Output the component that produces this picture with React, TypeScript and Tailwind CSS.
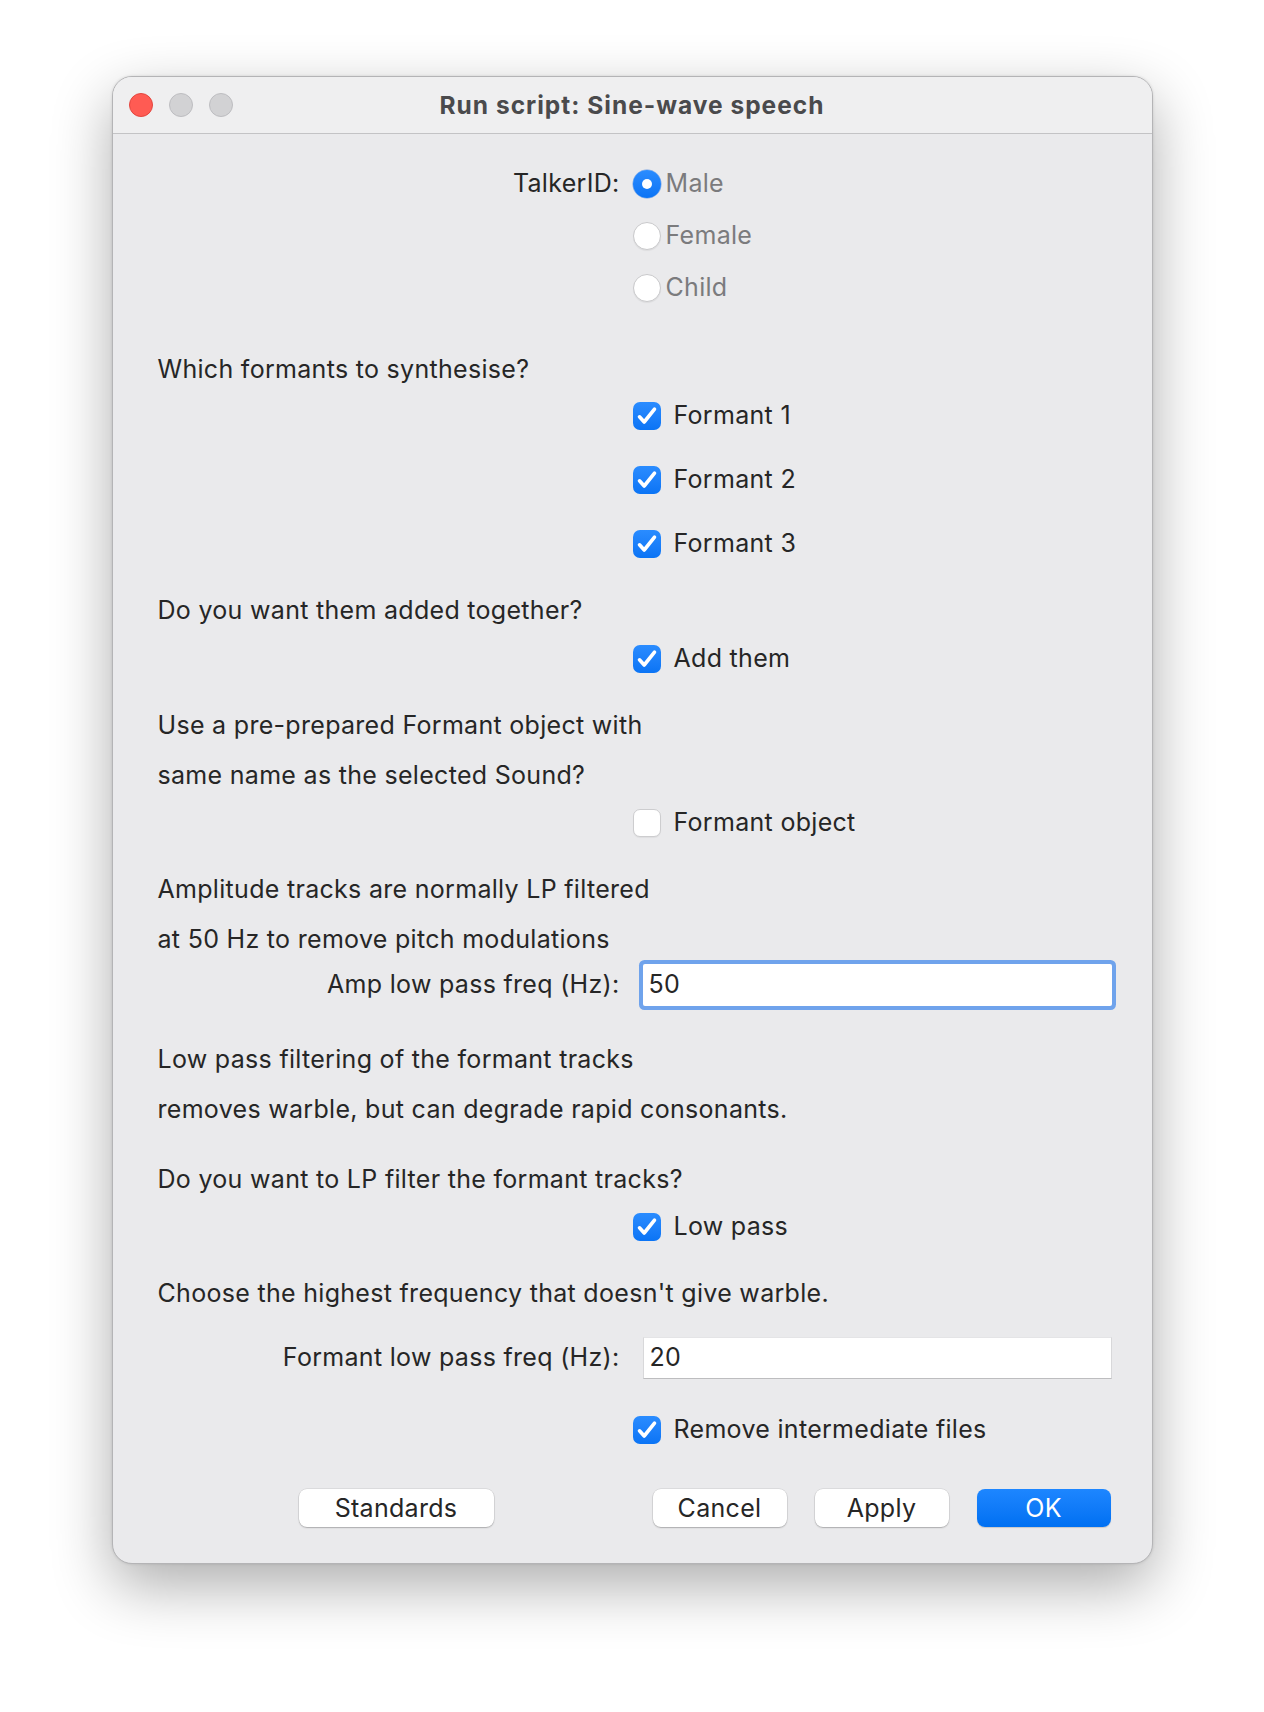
import React from "react";

const font = { fontFamily: "Inter, 'Noto Sans', sans-serif" };

function Radio({ checked, label }: { checked?: boolean; label: string }) {
  return (
    <div className="flex items-center">
      {checked ? (
        <span className="w-[28px] h-[28px] rounded-full bg-gradient-to-b from-[#2a8cff] to-[#0a74f5] flex items-center justify-center shadow-[0_0_0_0.5px_rgba(0,90,220,0.5)]">
          <span className="w-[10px] h-[10px] rounded-full bg-white" />
        </span>
      ) : (
        <span className="w-[28px] h-[28px] rounded-full bg-white border border-[#c9c9cb] shadow-[0_1px_1px_rgba(0,0,0,0.06)]" />
      )}
      <span className="ml-[5px] text-[#7b7b7d]">{label}</span>
    </div>
  );
}

function Check({ checked, label }: { checked?: boolean; label: string }) {
  return (
    <div className="flex items-center">
      {checked ? (
        <span className="w-[28px] h-[28px] rounded-[7px] bg-gradient-to-b from-[#2a8cff] to-[#0a74f5] flex items-center justify-center">
          <svg width="28" height="28" viewBox="0 0 28 28" fill="none">
            <path d="M6.5 14.8 L11.2 20 L21.5 7.2" stroke="white" strokeWidth="3.6" strokeLinecap="round" strokeLinejoin="round" />
          </svg>
        </span>
      ) : (
        <span className="w-[28px] h-[28px] rounded-[7px] bg-white border border-[#cdcdcf] shadow-[0_1px_1px_rgba(0,0,0,0.05)]" />
      )}
      <span className="ml-[13px] text-[#262626]">{label}</span>
    </div>
  );
}

// row with a right-aligned label column and a control column
function Row({ label, children, className = "" }: { label?: string; children?: React.ReactNode; className?: string }) {
  return (
    <div className={"flex items-center " + className}>
      <div className="w-[475px] shrink-0 pr-[13px] text-right text-[#262626]">{label}</div>
      <div className="flex-1">{children}</div>
    </div>
  );
}

function Text({ children, className = "" }: { children: React.ReactNode; className?: string }) {
  return <div className={"h-[40px] flex items-center text-[#262626] " + className}>{children}</div>;
}

function Button({ children, primary, className = "" }: { children: React.ReactNode; primary?: boolean; className?: string }) {
  return (
    <button
      className={
        "h-[38px] rounded-[8px] text-[25px] leading-none flex items-center justify-center " +
        (primary
          ? "bg-gradient-to-b from-[#1d86ff] to-[#0070f2] text-white shadow-[0_1px_1px_rgba(0,0,0,0.15)] "
          : "bg-white text-[#262626] shadow-[0_0_0_0.5px_rgba(0,0,0,0.12),0_1px_1.5px_rgba(0,0,0,0.22)] ") +
        className
      }
    >
      {children}
    </button>
  );
}

export default function App() {
  return (
    <div className="min-h-[1712px] bg-white pt-[76px]" style={font}>
      <div className="mx-auto w-[1041px] h-[1488px] rounded-[20px] border border-[#b4b4b6] bg-[#eaeaec] overflow-hidden shadow-[0_22px_60px_rgba(0,0,0,0.32),0_0_3px_rgba(0,0,0,0.12)] flex flex-col text-[25px] tracking-[0.3px]">
        {/* title bar */}
        <div className="relative h-[57px] shrink-0 bg-[#efeff0] border-b border-[#c3c3c5] flex items-center justify-center">
          <div className="absolute left-[16px] top-[16px] flex gap-[16px]">
            <span className="w-[24px] h-[24px] rounded-full bg-[#ff5b53] border border-[#e2463f]" />
            <span className="w-[24px] h-[24px] rounded-full bg-[#d2d2d4] border border-[#bdbdc0]" />
            <span className="w-[24px] h-[24px] rounded-full bg-[#d2d2d4] border border-[#bdbdc0]" />
          </div>
          <div className="text-[24.5px] font-bold tracking-[1px] text-[#4a4a4c]">Run script: Sine-wave speech</div>
        </div>

        {/* form */}
        <div className="pl-[45px] pr-[40px] pt-[30px]">
          <Row label="TalkerID:" className="h-[40px]">
            <Radio checked label="Male" />
          </Row>
          <Row className="h-[40px] mt-[12px]">
            <Radio label="Female" />
          </Row>
          <Row className="h-[40px] mt-[12px]">
            <Radio label="Child" />
          </Row>

          <Text className="mt-[42px]">Which formants to synthesise?</Text>
          <Row className="h-[40px] mt-[6px]">
            <Check checked label="Formant 1" />
          </Row>
          <Row className="h-[40px] mt-[24px]">
            <Check checked label="Formant 2" />
          </Row>
          <Row className="h-[40px] mt-[24px]">
            <Check checked label="Formant 3" />
          </Row>

          <Text className="mt-[27px]">Do you want them added together?</Text>
          <Row className="h-[40px] mt-[8px]">
            <Check checked label="Add them" />
          </Row>

          <Text className="mt-[27px]">Use a pre-prepared Formant object with</Text>
          <Text className="mt-[10px]">same name as the selected Sound?</Text>
          <Row className="h-[40px] mt-[7px]">
            <Check label="Formant object" />
          </Row>

          <Text className="mt-[27px]">Amplitude tracks are normally LP filtered</Text>
          <Text className="mt-[10px]">at 50 Hz to remove pitch modulations</Text>
          <Row label="Amp low pass freq (Hz):" className="h-[50px] mt-0">
            <div className="ml-[10px] w-[469px] h-[42px] bg-white rounded-[2px] shadow-[0_0_0_4px_#6fa3ec] flex items-center px-[6px] text-[#262626]">
              50
            </div>
          </Row>

          <Text className="mt-[30px]">Low pass filtering of the formant tracks</Text>
          <Text className="mt-[10px]">removes warble, but can degrade rapid consonants.</Text>

          <Text className="mt-[30px]">Do you want to LP filter the formant tracks?</Text>
          <Row className="h-[40px] mt-[7px]">
            <Check checked label="Low pass" />
          </Row>

          <Text className="mt-[27px]">Choose the highest frequency that doesn't give warble.</Text>
          <Row label="Formant low pass freq (Hz):" className="h-[42px] mt-[23px]">
            <div className="ml-[10px] w-[469px] h-[42px] bg-white border-t border-t-[#e4e4e6] border-b border-b-[#bdbdbf] border-x border-x-[#d8d8da] flex items-center px-[6px] text-[#262626]">
              20
            </div>
          </Row>

          <Row className="h-[40px] mt-[31px]">
            <Check checked label="Remove intermediate files" />
          </Row>

          <div className="flex items-center mt-[38px] h-[40px]">
            <Button className="ml-[141px] w-[195px]">Standards</Button>
            <Button className="ml-[159px] w-[134px]">Cancel</Button>
            <Button className="ml-[28px] w-[134px]">Apply</Button>
            <Button primary className="ml-[28px] w-[134px]">OK</Button>
          </div>
        </div>
      </div>
    </div>
  );
}
